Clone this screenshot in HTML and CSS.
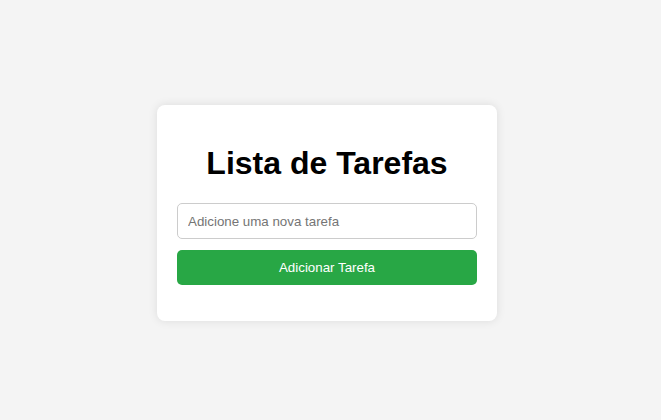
FILE: index.html
```html
<!DOCTYPE html>
<html lang="pt">
<head>
<meta charset="utf-8">
<title>Lista de Tarefas</title>
<link rel="stylesheet" href="styles.css">
</head>
<body>
<div class="card">
  <h1 class="title">Lista de Tarefas</h1>
  <input class="task-input" type="text" placeholder="Adicione uma nova tarefa">
  <button class="add-btn">Adicionar Tarefa</button>
  <ul class="task-list"></ul>
</div>
</body>
</html>
```

FILE: styles.css
```css
html, body {
  margin: 0;
  padding: 0;
}
body {
  background: #f4f4f4;
  font-family: "Liberation Sans", Arial, sans-serif;
  display: flex;
  justify-content: center;
  align-items: flex-start;
  padding: 105px 7px 0 0;
  height: 420px;
  box-sizing: border-box;
}
.card {
  background: #fff;
  width: 340px;
  box-sizing: border-box;
  padding: 20px;
  border-radius: 8px;
  box-shadow: 0 0 10px rgba(0,0,0,0.1);
}
.title {
  margin: 20px 0 21px;
  font-size: 32px;
  line-height: 37px;
  font-weight: bold;
  text-align: center;
  color: #000;
}
.task-input {
  display: block;
  width: 100%;
  box-sizing: border-box;
  height: 36px;
  padding: 0 10px;
  font-family: inherit;
  font-size: 13.333px;
  border: 1px solid #ccc;
  border-radius: 5px;
  margin: 0 0 11px;
  outline: none;
}
.task-input::placeholder {
  color: #757575;
}
.add-btn {
  display: block;
  width: 100%;
  height: 35px;
  background: #28a745;
  color: #fff;
  border: none;
  border-radius: 5px;
  font-family: inherit;
  font-size: 13.333px;
  cursor: pointer;
}
.task-list {
  list-style: none;
  margin: 16px 0 0;
  padding: 0;
}
```
